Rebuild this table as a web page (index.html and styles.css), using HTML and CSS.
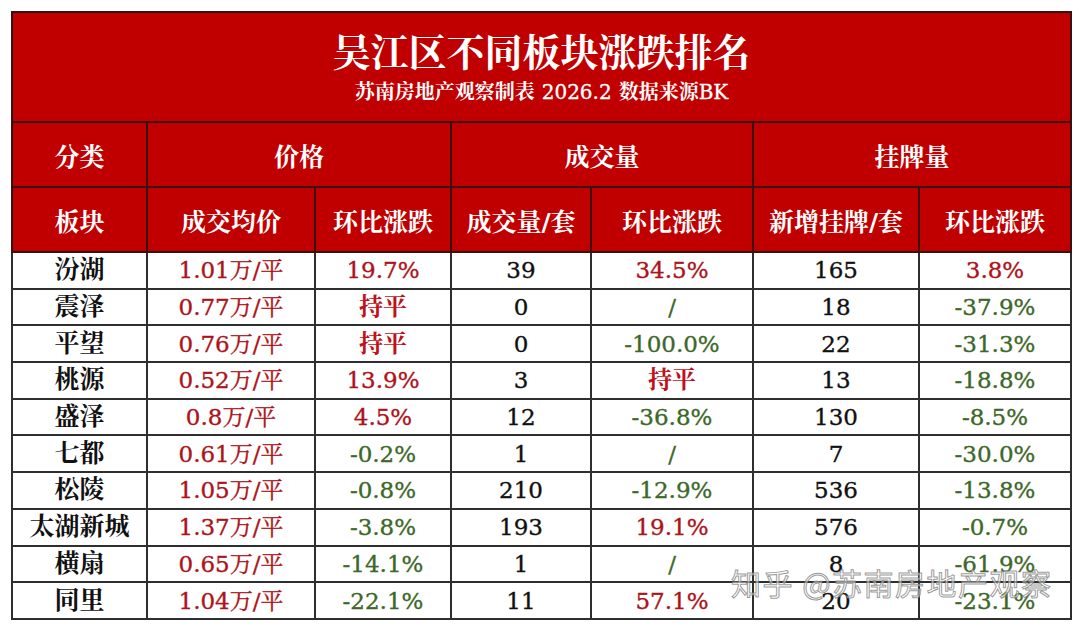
FILE: index.html
```html
<!DOCTYPE html>
<html lang="zh-CN">
<head>
<meta charset="utf-8">
<title>吴江区不同板块涨跌排名</title>
<link rel="stylesheet" href="styles.css">
</head>
<body>
<div class="page">
  <table class="sheet">
    <colgroup>
      <col class="c1"><col class="c2"><col class="c3"><col class="c4"><col class="c5"><col class="c6"><col class="c7">
    </colgroup>
    <thead>
      <tr class="title-row">
        <th colspan="7">
          <div class="title">吴江区不同板块涨跌排名</div>
          <div class="subtitle">苏南房地产观察制表 <span class="lat">2026.2</span> 数据来源<span class="lat">BK</span></div>
        </th>
      </tr>
      <tr class="head-row">
        <th>分类</th>
        <th colspan="2">价格</th>
        <th colspan="2">成交量</th>
        <th colspan="2">挂牌量</th>
      </tr>
      <tr class="head-row">
        <th>板块</th>
        <th>成交均价</th>
        <th>环比涨跌</th>
        <th>成交量/套</th>
        <th>环比涨跌</th>
        <th>新增挂牌/套</th>
        <th>环比涨跌</th>
      </tr>
    </thead>
    <tbody>
      <tr><td class="name">汾湖</td><td class="up">1.01万/平</td><td class="up">19.7%</td><td class="num">39</td><td class="up">34.5%</td><td class="num">165</td><td class="up">3.8%</td></tr>
      <tr><td class="name">震泽</td><td class="up">0.77万/平</td><td class="flat">持平</td><td class="num">0</td><td class="down">/</td><td class="num">18</td><td class="down">-37.9%</td></tr>
      <tr><td class="name">平望</td><td class="up">0.76万/平</td><td class="flat">持平</td><td class="num">0</td><td class="down">-100.0%</td><td class="num">22</td><td class="down">-31.3%</td></tr>
      <tr><td class="name">桃源</td><td class="up">0.52万/平</td><td class="up">13.9%</td><td class="num">3</td><td class="flat">持平</td><td class="num">13</td><td class="down">-18.8%</td></tr>
      <tr><td class="name">盛泽</td><td class="up">0.8万/平</td><td class="up">4.5%</td><td class="num">12</td><td class="down">-36.8%</td><td class="num">130</td><td class="down">-8.5%</td></tr>
      <tr><td class="name">七都</td><td class="up">0.61万/平</td><td class="down">-0.2%</td><td class="num">1</td><td class="down">/</td><td class="num">7</td><td class="down">-30.0%</td></tr>
      <tr><td class="name">松陵</td><td class="up">1.05万/平</td><td class="down">-0.8%</td><td class="num">210</td><td class="down">-12.9%</td><td class="num">536</td><td class="down">-13.8%</td></tr>
      <tr><td class="name">太湖新城</td><td class="up">1.37万/平</td><td class="down">-3.8%</td><td class="num">193</td><td class="up">19.1%</td><td class="num">576</td><td class="down">-0.7%</td></tr>
      <tr><td class="name">横扇</td><td class="up">0.65万/平</td><td class="down">-14.1%</td><td class="num">1</td><td class="down">/</td><td class="num">8</td><td class="down">-61.9%</td></tr>
      <tr><td class="name">同里</td><td class="up">1.04万/平</td><td class="down">-22.1%</td><td class="num">11</td><td class="up">57.1%</td><td class="num">20</td><td class="down">-23.1%</td></tr>
    </tbody>
  </table>
  <div class="watermark">知乎 @苏南房地产观察</div>
</div>
</body>
</html>
```

FILE: styles.css
```css
html, body {
  margin: 0;
  padding: 0;
  background: #ffffff;
}

.page {
  position: relative;
  width: 1080px;
  height: 630px;
  padding: 11px 0 0 11px;
  box-sizing: border-box;
  font-family: "DejaVu Serif", "Noto Serif CJK SC", "Noto Sans CJK SC", serif;
}

.sheet {
  border-collapse: collapse;
  table-layout: fixed;
  width: 1059px;
}

.c1 { width: 135px; }
.c2 { width: 168px; }
.c3 { width: 136px; }
.c4 { width: 140px; }
.c5 { width: 162px; }
.c6 { width: 166px; }
.c7 { width: 152px; }

.sheet th,
.sheet td {
  border: 2px solid #2e2e2e;
  padding: 0;
  text-align: center;
  vertical-align: middle;
  white-space: nowrap;
}

.sheet thead th {
  background: #c00000;
  color: #ffffff;
  font-weight: 700;
  font-size: 25px;
  border-color: #3a1010;
}

.title-row th {
  height: 108px;
}

.title {
  font-size: 38px;
  line-height: 46px;
  font-weight: 700;
}

.subtitle {
  font-size: 20px;
  line-height: 26px;
  margin-top: 3px;
  font-weight: 700;
}

.subtitle .lat {
  font-weight: 400;
  -webkit-text-stroke: 0.3px #ffffff;
}

.head-row th {
  height: 63px;
}

.sheet tbody td {
  height: 34.7px;
  font-size: 23px;
  line-height: 30px;
  -webkit-text-stroke: 0.35px currentColor;
}

.sheet tbody td.name {
  color: #111111;
  font-weight: 700;
  font-size: 25px;
  -webkit-text-stroke: 0;
}

.sheet tbody td.num {
  color: #111111;
}

.sheet tbody td.up {
  color: #ad131a;
}

.sheet tbody td.flat {
  color: #c0101a;
  font-weight: 700;
  font-size: 24px;
  -webkit-text-stroke: 0;
}

.sheet tbody td.down {
  color: #3d6829;
}

.watermark {
  position: absolute;
  left: 731px;
  top: 564px;
  font-family: "Noto Sans CJK SC", "Noto Sans", sans-serif;
  font-size: 30px;
  line-height: 36px;
  color: rgba(255, 255, 255, 0.55);
  -webkit-text-stroke: 1px rgba(120, 120, 120, 0.75);
  letter-spacing: 1.5px;
  white-space: nowrap;
}
```
